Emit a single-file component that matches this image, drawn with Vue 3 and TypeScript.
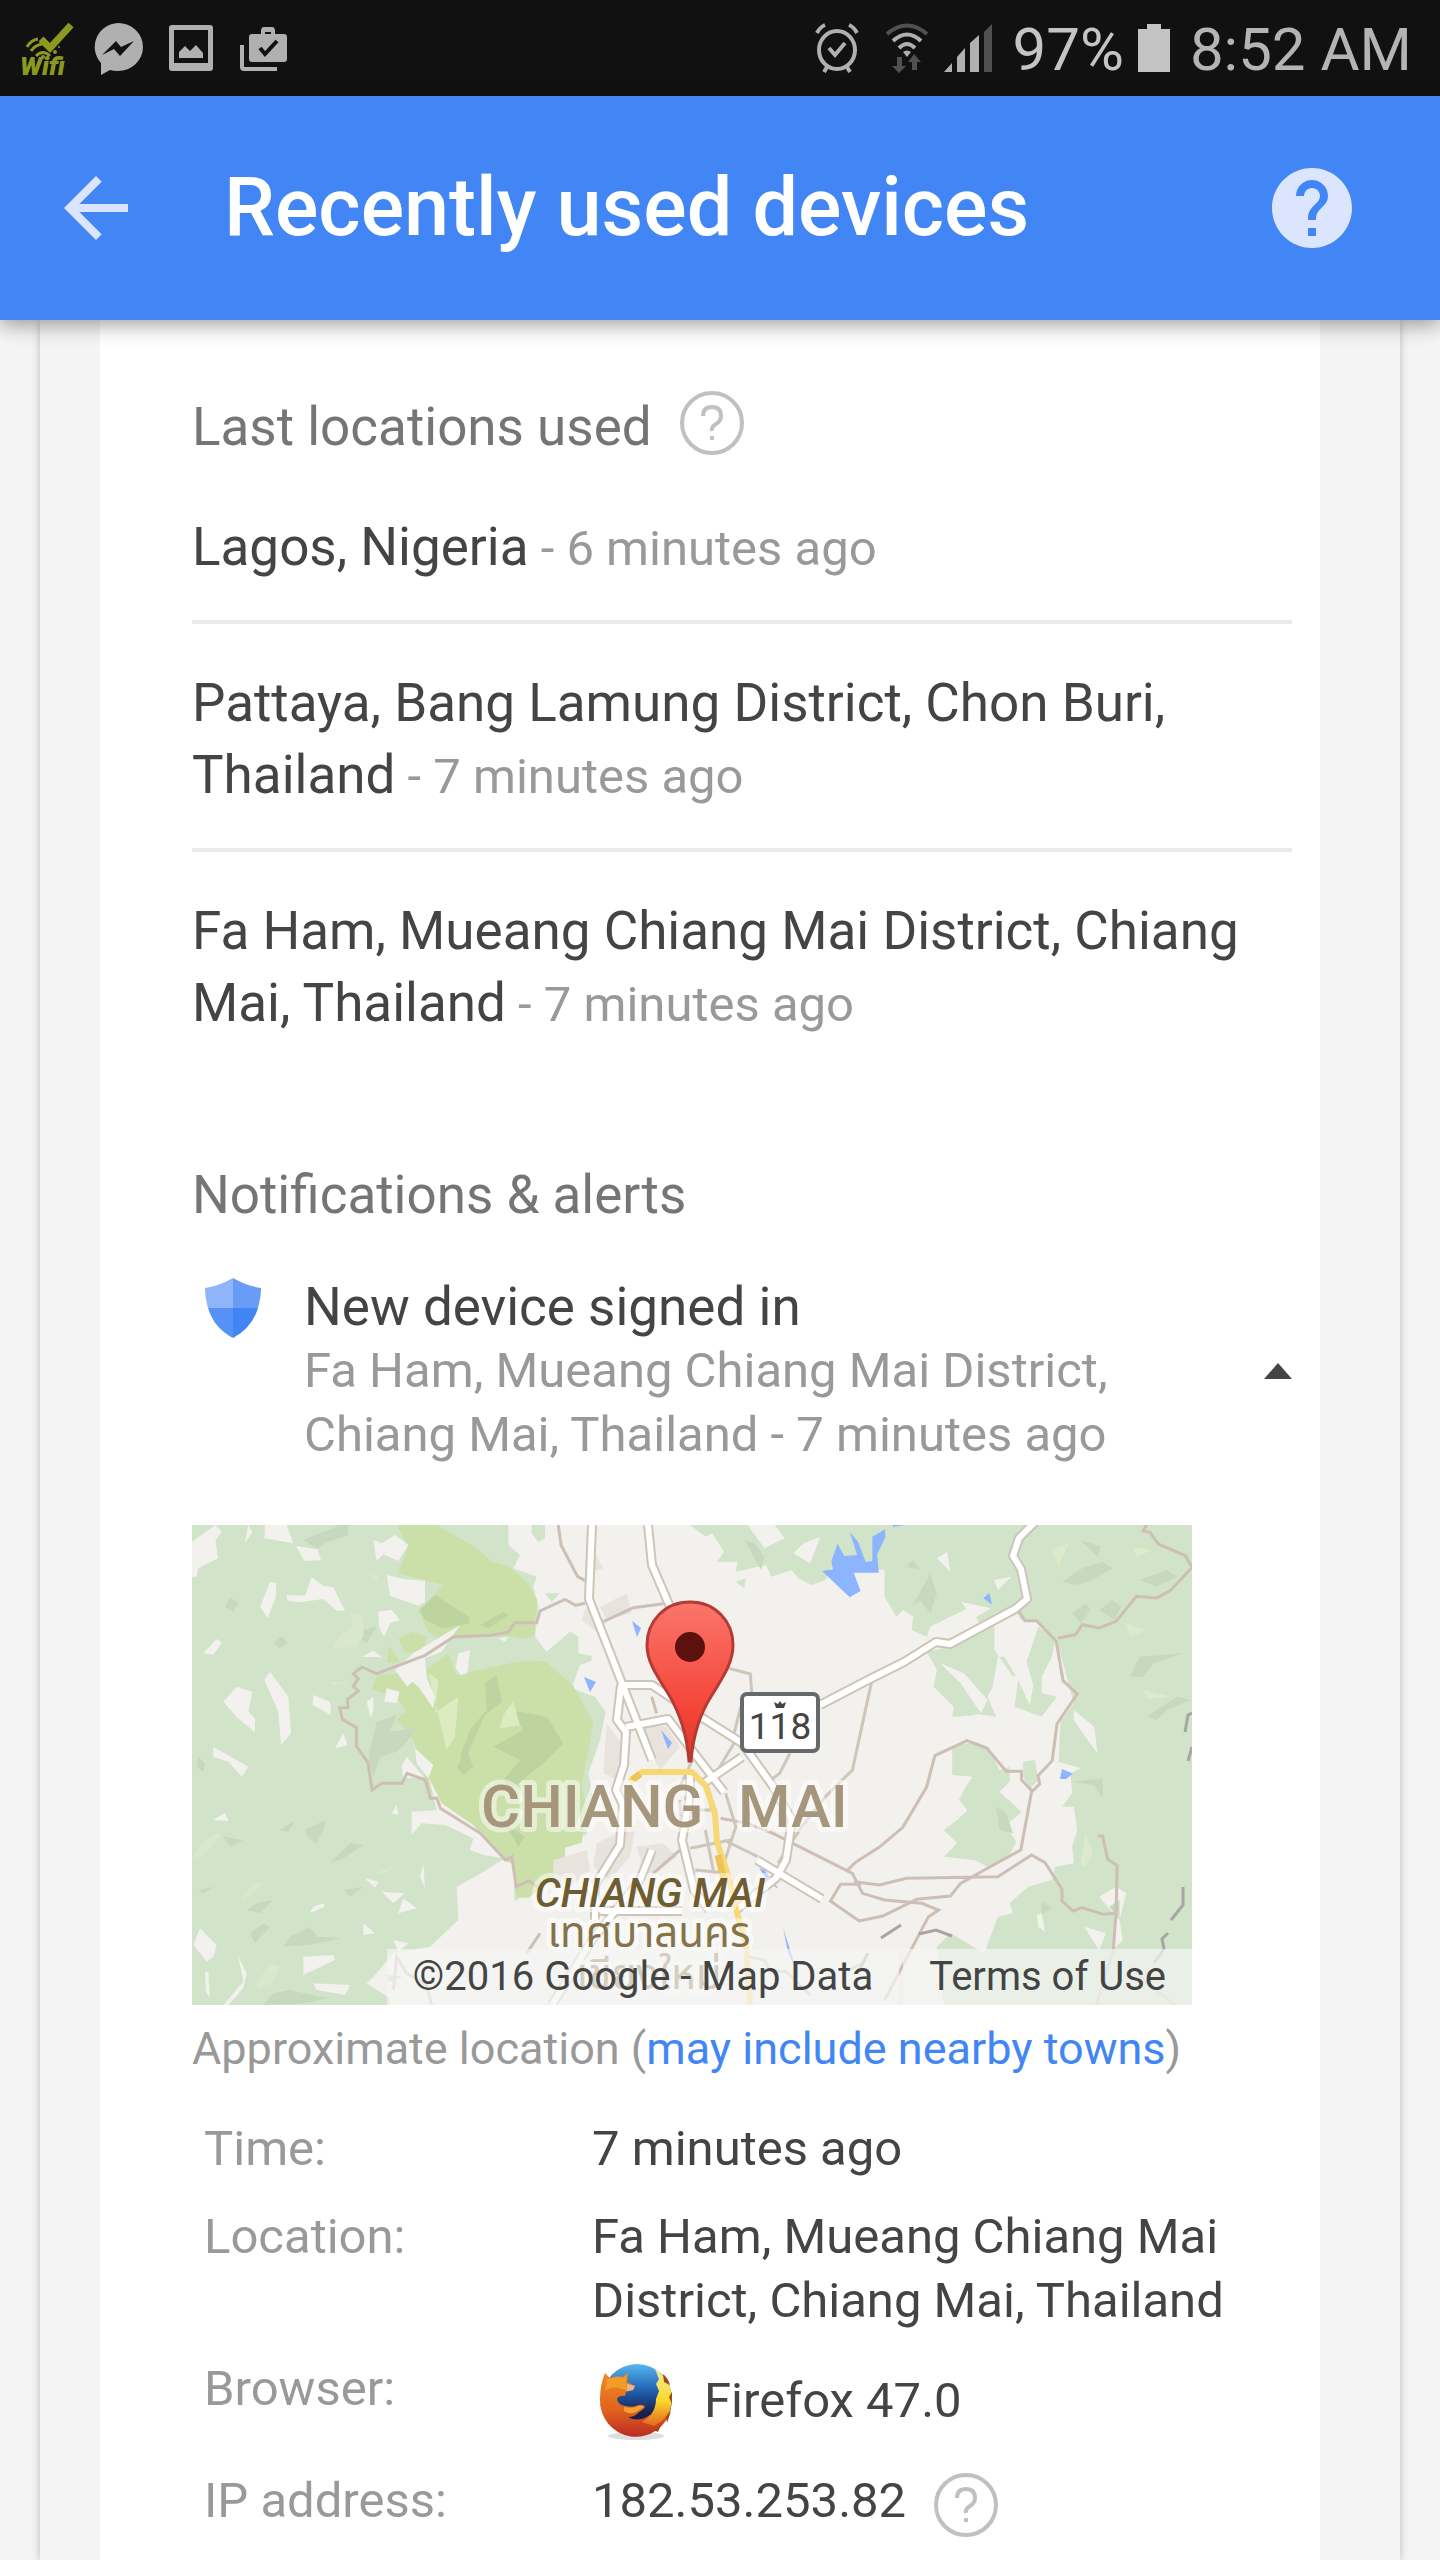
<script setup lang="ts">
import { ref } from 'vue'

interface UsedLocation {
  place: string
  when: string
}

const locations: UsedLocation[] = [
  { place: 'Lagos, Nigeria', when: '6 minutes ago' },
  { place: 'Pattaya, Bang Lamung District, Chon Buri, Thailand', when: '7 minutes ago' },
  { place: 'Fa Ham, Mueang Chiang Mai District, Chiang Mai, Thailand', when: '7 minutes ago' },
]

const expanded = ref<boolean>(true)
</script>

<template>
  <div class="screen">
    <div class="status">
      <div class="status-group">
        <svg class="ic-app" viewBox="0 0 56 56" aria-hidden="true">
          <path d="M23 19l9 9L53 5" fill="none" stroke="#8b9a1f" stroke-width="7" />
          <path d="M9 27q4-7 11-8M13 31q4-6 11-7M18 36q7-7 14 0" fill="none" stroke="#8b9a1f" stroke-width="3" />
          <circle cx="25" cy="37" r="2" fill="#8b9a1f" />
          <circle cx="37" cy="32" r="2" fill="#8b9a1f" />
          <circle cx="41" cy="27" r="1" fill="#8b9a1f" />
          <text x="2" y="55" class="wifi-word">Wifi</text>
        </svg>
        <svg class="ic-app" viewBox="0 0 56 56" aria-hidden="true">
          <path d="M28 3a25 24 0 0 1 0 48q-5 0-8-1l-9 5V43A24.500 24 0 0 1 28 3z" fill="#b0b0b0" />
          <path d="M12 35l14-14 5 6 13-6-14 15-6-7z" fill="#111" />
        </svg>
        <svg class="ic-app" viewBox="0 0 56 56" aria-hidden="true">
          <path fill-rule="evenodd" d="M10 5h38q3 0 3 3v40q0 3-3 3H10q-3 0-3-3V8q0-3 3-3zm2 5v33h34V10z" fill="#b0b0b0" />
          <path d="M17 38v-6l6-6 5 5 6-6 7 8v5z" fill="#b0b0b0" />
        </svg>
        <svg class="ic-app" viewBox="0 0 56 56" aria-hidden="true">
          <path d="M8 25v22q0 2 2 2h33" fill="none" stroke="#b0b0b0" stroke-width="4" />
          <path fill-rule="evenodd" d="M18 14h9v-3q0-4 3-4h8q3 0 3 4v3h9q3 0 3 3v22q0 3-3 3H18q-3 0-3-3V17q0-3 3-3zm13 0h6v-2h-6z" fill="#b0b0b0" />
          <path d="M26 28l5 6 12-13" fill="none" stroke="#111" stroke-width="4" />
        </svg>
      </div>
      <div class="status-group status-right">
        <svg class="ic-alarm" viewBox="0 0 44 50" aria-hidden="true">
          <g fill="none" stroke="#b0b0b0" stroke-width="4">
            <ellipse cx="22" cy="27" rx="18" ry="19" />
            <path d="M2 10q3-6 8-8M42 10q-3-6-8-8M12 44l-3 5M32 44l3 5M14 25l6 7 10-12" />
          </g>
        </svg>
        <svg class="ic-wifi" viewBox="0 0 44 50" aria-hidden="true">
          <g fill="none" stroke-width="4">
            <path d="M2 11q20-17 40 0" stroke="#505050" />
            <path d="M8 18q14-13 28 0M14 25q8-8 16 0" stroke="#b0b0b0" />
          </g>
          <path d="M18 29q4-3 8 0l-4 5z" fill="#b0b0b0" />
          <path d="M12 34h5v9h4l-7 7-7-7h5zM27 47h5v-8h4l-7-8-6 8h4z" fill="#505050" />
        </svg>
        <svg class="ic-signal" viewBox="0 0 50 50" aria-hidden="true">
          <path d="M1 49l8-9v9zM14 49V34l8-9v24zM27 49V20l9-8v37z" fill="#b0b0b0" />
          <path d="M41 49V9l8-8v48z" fill="#505050" />
        </svg>
        <span class="battery-level">97%</span>
        <svg class="ic-battery" viewBox="0 0 32 48" aria-hidden="true">
          <path d="M9 0h14v5h9v43H0V5h9z" fill="#c4c4c4" />
        </svg>
        <span class="clock">8:52 AM</span>
      </div>
    </div>

    <header class="bar">
      <button class="icon-button" type="button" aria-label="Back">
        <svg viewBox="0 0 24 24"><path d="M20 11H7.830l5.590-5.590L12 4l-8 8 8 8 1.410-1.410L7.830 13H20v-2z" fill="#dbe6fe" /></svg>
      </button>
      <h1>Recently used devices</h1>
      <button class="icon-button" type="button" aria-label="Help">
        <svg viewBox="0 0 24 24"><path d="M12 2C6.480 2 2 6.480 2 12s4.480 10 10 10 10-4.480 10-10S17.520 2 12 2zm1 17h-2v-2h2v2zm2.070-7.750l-.9.920C13.450 12.900 13 13.500 13 15h-2v-.5c0-1.100.45-2.100 1.170-2.830l1.240-1.260c.37-.36.59-.86.59-1.410 0-1.100-.9-2-2-2s-2 .9-2 2H8c0-2.210 1.790-4 4-4s4 1.790 4 4c0 .88-.36 1.680-.93 2.250z" fill="#dbe6fe" /></svg>
      </button>
    </header>

    <main class="backdrop">
      <div class="card">
        <div class="panel">
          <section>
            <div class="heading-row">
              <h2>Last locations used</h2>
              <button class="hint" type="button" aria-label="About last locations">
                <svg viewBox="0 0 64 64"><circle cx="32" cy="32" r="30" /><path d="M23 25q0-9 9-9t9 9q0 5-5 8t-4 7" /><path d="M32 45v4" /></svg>
              </button>
            </div>
            <ul class="places">
              <li v-for="item in locations" :key="item.place">{{ item.place }}<span class="when"> - {{ item.when }}</span></li>
            </ul>
          </section>

          <section class="alerts">
            <h2>Notifications &amp; alerts</h2>
            <div class="alert">
              <svg class="shield" viewBox="0 0 58 62" aria-hidden="true">
                <path d="M29 1Q15 9 1 11Q1 20 4 31H29z" fill="#8fb4fa" />
                <path d="M29 1Q43 9 57 11Q57 20 54 31H29z" fill="#689cf7" />
                <path d="M4 31Q10 51 29 61V31z" fill="#5691f6" />
                <path d="M54 31Q48 51 29 61V31z" fill="#4185f5" />
              </svg>
              <div class="alert-text">
                <h3>New device signed in</h3>
                <p>Fa Ham, Mueang Chiang Mai District, Chiang Mai, Thailand - 7 minutes ago</p>
              </div>
              <button class="toggle" type="button" aria-label="Toggle details" :aria-expanded="expanded" @click="expanded = !expanded">
                <svg viewBox="0 0 28 16"><path d="M14 0l14 16H0z" fill="#444" /></svg>
              </button>
            </div>

            <div v-if="expanded" class="details">
              <div class="map">
                <svg class="map-art" viewBox="0 0 1000 480" role="img" aria-label="Map of Chiang Mai">
                  <defs>
                    <linearGradient id="pin" x1="0" y1="0" x2="0" y2="1">
                      <stop offset="0" stop-color="#fb756b" />
                      <stop offset="0.700" stop-color="#f44336" />
                      <stop offset="1" stop-color="#d83a30" />
                    </linearGradient>
                  </defs>
                  <rect width="1000" height="480" fill="#f2f1ed" />

                  <!-- western hills -->
                  <g transform="translate(-12 -15) scale(0.33333)">
                    <path fill="#d1e4c9" d="M36 45H985V105L1020 135 1000 175 1070 200 1060 230 1075 290 1065 380 1100 425 1170 365 1195 380V430L1235 437V452L1200 465 1175 535 1245 560 1277 605 1260 690 1225 790 1240 870 1220 975 1165 980 1100 1100 1003 1175V1050L965 1050 895 1095 830 1130 835 1230 750 1310 640 1330 590 1390 560 1420 630 1465V1485H36zM1055 45h40v40l-20 10-20-25zM1095 250h45l-25 25z" />
                    <path fill="#cbdfa9" d="M650 45H770L890 115 940 158 985 168 1040 215 1072 270 1065 330V375L1030 388 990 378 820 380 785 392 745 365 715 300 760 260 790 225 655 190 685 110zM655 385l40-20 45 15-10 40-55 10zM625 405l35 50-38 5zM592 495l65-5 60 40 45 60-22-110 65-50 25 65 180-40 85-2 85 75 60 110-35 190 15 70-15 100-50 15v35l-35 60-75 55h-35l-10-100-45-20-160-130-50-80-45-145-50-60 30-25-30-40-75-25z" />
                    <path fill="#bdd3a0" d="M720 300l45-45 100 65 5 20-85 15-50-25zM900 345l70-40 15 10-60 40zM915 520l35-25 15 80-50 40-45 100-15 50-15-25 30-80 50-60zM990 600l110 20 50 80-60 60-100 80-20-30 50-60-80-40 90-50zM830 770l30-50 20 50-30 25zM975 940l60 40-20 30z" />
                    <path fill="#dcebc0" d="M745 490l30 20-10 100 40-30 30-20-10 120-25 40zM1000 575l-30 40-10 40 60-10z" />
                    <path fill="#f2f1ed" d="M36 95l70-50 20 20-20 25 8 55-60 30-4 25H36zM255 45h65l20 55-87-15zM205 45l12 20-22 35zM348 108l65 10 10 32-50 3zM580 90l25 10 40-25 40 30-30 48-45-20-20 20zM270 215l18 5v40l-25 65-22-35zM320 255l55 2 20-55 35 25 30 5 35 70h-25l-40-35-70 10-38-5zM620 195l50 12 65 5v65l-20 10-85-30zM595 305l40-5 25 30-30 10-18 40-15-30zM70 430l40-43 15 12-25 35zM545 440l35-18 27 20zM270 485l55 75 8 110-30 35-8-100-42-95zM130 575l40-45 47 15-12 60 20 20v42l-55-45zM400 555l50 20 3 40-55-30zM560 575l20-15v40l-8 25zM620 535l38 10-7 35-38-5zM645 480l55-50 140-85-55 80-50 20 5 60 25 55-5 35-45-65-18-15-15 15zM835 430l35-10-8 70-20 5-15-20zM665 770l15-30 50 60-60 5zM705 715l55 50-15 40-35-45zM745 800l40 80 95 65 90 100-60-10-40-15 10-35-85-40-70-5-30 35V905l75-5zM635 910l15-25 5 30zM100 930l35-22 10 25zM100 710l105 60-20 30-40-45-45-15zM465 715l25-45 12 35zM605 1145l70 5-35 30zM655 1210l15-45 40 30zM730 1060l5 75-15-35zM555 1105l40 10-10 18zM60 1255l50 50-10 35-20 15-40-50zM175 1340l25 50-10 45-45 50h-15l60-70zM400 1190l30-10 5 10-45 18zM550 1240l35 30-35 5zM370 1340l90-5 5 15-95 45zM400 1420l110 5-15 30-85-15zM75 1385h10l5 80-12-20zM640 1290l45 10-30 25zM955 385l30-5-10 15z" />
                    <path fill="#c6d8be" d="M370 90l110-45h25v30l-60 20-35 20zM150 260l25 20-15 25-25-15zM280 400l25-20 20 20-25 15zM550 360l40-10-30 50-25-15zM590 635l60-20-20 50 80-10-30 40-30 30-50 15-20 60-15-60zM375 960l60-30v20l-25 50-25-15zM300 960l45-30-20 35zM130 980l60 10-40 20zM450 1060l60-60 40 5-60 40zM330 1280l60-30 20 30 75 5-100 20-75 5zM210 1270l40-30 20 10-45 50zM200 1200l30-20 50-10-40 40zM250 1485l30-35 50-10 110 25-60 15zM55 1140l45-10-30 20zM55 740l20 20-5 25-20-15zM490 1140l60-10-40 30zM620 1395l50 5-45 15z" />
                    <path fill="#d9e8ca" d="M510 310l40 10v60l-20 30-70 5 20-40 40-20zM36 1050l30-50 40-30h20l-50 60zM450 515l60 5-55 4zM570 190l25 10-5 15zM230 1420l40-60 30 10-25 50-40 15zM590 1090l60-30-30 30zM180 1170l40-50 40-5-60 50z" />
                    <path fill="#e8e3dc" d="M1240 120l30 55-35 10zM1260 290l80-40 15 60-75 20zM1215 300l20-20 40 60-20 30-50-40zM1280 640l60 80-30 90-40-20zM1380 640l80 10 40 60-60 70-30-60zM1120 1050l100-30 10 60-60 50-50-20zM1250 1000l120-60-20 100-60 70-50-40zM1370 1010l80-10 40 40-90 70z" />
                  </g>

                  <!-- eastern hills -->
                  <g transform="translate(488 -15) scale(0.33807 0.33333)">
                    <path fill="#d1e4c9" d="M30 45H1515V1485H780L760 1310 800 1270 900 1330 940 1220 985 1210 975 1180 1030 1130 1100 1110 1110 1070 1165 1060 1160 1010 1175 960 1165 890 1130 890 1160 850 1155 790 1185 775 1120 755 1125 635 1165 580 1120 410 1055 330 1010 330 990 300 930 310V420L985 500 1030 440 1060 350 1110 390 1100 440 1070 500V550L1115 560 1070 620 990 590 1000 510 960 440 940 440 925 530 910 560 935 620 860 610 880 615 820 620 805 620 810 590 750 530 760 480 730 425 800 410 860 370 890 350 860 290 740 350 730 380 685 360 690 320 660 300 640 320 605 260 605 180 450 170 430 210 390 225 350 205 330 180 270 200 255 165 165 185 170 155 110 155 130 125 95 70 75 80zM165 215l30-10-5 30zM805 710l70-15 40 20 30 65 30-10v45l-30 30 65 60-20 20-30 20 35 50-25 50-60 25-40-20-90-10 40-40-40-40 40-30 30-30-25-30 20-40 20-30-60-5zM1015 755l35-5 10 60-25 25-20-35z" />
                    <path fill="#f2f1ed" d="M200 45h80l30 40-60 30zM335 130l30-30 50-20-30 80zM760 145l30-20 10 60zM930 210l50-10-40 40zM830 275l90 20-50 30zM1165 600l60 50 10 80-30-40-40-60zM770 460l70 30 70 80-20 40-60-90zM985 350l-20 80 30 70 40 85 10-60-20-70 30-100zM1240 1160l50-30 30 20-20 80 10 60-30 30 10-100zM1195 1250l65 20-20 50zM1055 1215l15-5 10 55-20-15z" />
                    <path fill="#c6d8be" d="M1130 215l60-40 60-20 30 20-70 40-40 10zM1185 90l60 20-10 30zM1360 210l80-30 30 20-60 30zM1160 310l40-30 15 20-30 40zM1240 300l40-30 25 20-20 40zM1330 500l30-60 130-10-90 30-30 40zM1380 620l90-60 40 10-70 30-30 30zM740 190l20 60-20 60-30-40-20 15zM190 90l30 10 30 40-10 40zM670 170l20-20 20 30zM1160 815l90-10v60l-25-40zM935 890l30 20 20 60-40-10zM1070 1175l30 20-30 20zM1270 1190l30-20v60z" />
                    <path fill="#dceacb" d="M1340 110l60 10-50 20zM1100 120l50-20-30 70zM1185 1060l15-90 20 60-20 40zM1320 340l60 20-50 20zM1370 540l80 20-70 5z" />
                    <path fill="#8db5ff" d="M502 66l25 30 22 60 20-3V80l38-22v25l-24 50 5 55h-74l20 55-32 19-82-79 32-5-4-25 18-52 20 37 38-3zM630 45h35l-35 6zM897 265l18-16 8 35zM1130 777l32 14-20 16h-18zM235 1075l15 5 42 57-30-20zM305 1255l32 100 3 20-20-45z" />
                  </g>
                  <path fill="#8db5ff" d="M440 96l9 7-4 9zM392 152l12 5-6 10zM469 205l11 13-4 6z" />

                  <!-- minor roads and district borders -->
                  <g transform="translate(-12 -15) scale(0.33333)" fill="none" stroke="#cdbfb6" stroke-width="9">
                    <path d="M1215 280l-28 6-32-18-75 35-10 35h-65l-20 28-50 10-115 5-85 55-145 55-45-20-25 20 15 15-15 22 15 15-33 25 2 25h-25l8 35 42 25v55l35 50 12 82 30-20h60l15-30 55 20 15 55h20l10 30 120 75 75 80 20-10 12 90 38-18 40 30" />
                    <path d="M1135 45l8 60 50 95 22 12M1270 335l90-42 90-12M1415 560l15 50M1420 1090l80-70M1040 1330l40-60M640 1440l10-100 30 50 60 35 15 60" />
                  </g>
                  <g transform="translate(488 -15) scale(0.33807 0.33333)" fill="none" stroke="#cfc6ba" stroke-width="9">
                    <path stroke="#cdbfb6" d="M1380 45l-10 17 20 5 25 35 80 35 20 35-65 70-40 22-60-5-60 75-50 20-50-10-20 30-52 10M1000 300l20 32h35l58 62 20 118 42 40-60 90-14 110-42 45 5 25-22 22-32-35v-25h-45l-58-70-58-22-95 45-25 95-70 120-70 60-70 45-28 28M1040 845l-32 175-108 60-70 40-30 38-100 10-100 50-70 15-85-60 30-50h60M1235 978h15l15 70 28 18-3 140-8 110-50 170M1285 1210l-32 3-65-20-25 10-33-30v-35l-50-80-40-23-100 65-270 5-80 20-75-10M120 925l80 15 75 30 235 120 30 60 65 20 110 10 50 20-30 20-130 250" />
                    <path d="M145 475l63 17 5 70M570 500l-60 280-80 80M325 730l-30 60-40 30M180 590l-20 80M160 700l-60 100M430 860l-70 90-70 110M135 850l30 100-35 110M130 990l100 50M30 1015l120-25M75 960l25 130M0 870l5 100M20 900h90M45 1080l100 10M50 720l-50 110M200 1340l50 10 15 30 50 5 70 70M500 1380l40-20M1340 1370l30 40 100 80" />
                  </g>

                  <!-- highways: casing then fill -->
                  <g fill="none" stroke-linejoin="round">
                    <g stroke="#cdc5b8" stroke-width="10">
                      <path d="M400 0L397 74 460 235M456 0l4 40 28 65M430 160h30l30 20 60 38 30 42 20 35-6 40-10 18-40 32M429 160l-4 35 9 12-2 33-8 25 7 15-3 40-25 40v35M434 202l42-8 56 73M628 180l48-25 36-18 32-20 14 2 65-35 12-10-6-30-8-13 6-18 20-20M565 335l65 39M550 232l-38 26M498 250v20l-8 45 12 50 15 20M395 356l15 30h80M360 480l40-65 48-60 12-30" />
                    </g>
                    <g stroke="#fff" stroke-width="6">
                      <path d="M400 0L397 74 460 235M456 0l4 40 28 65M430 160h30l30 20 60 38 30 42 20 35-6 40-10 18-40 32M429 160l-4 35 9 12-2 33-8 25 7 15-3 40-25 40v35M434 202l42-8 56 73M628 180l48-25 36-18 32-20 14 2 65-35 12-10-6-30-8-13 6-18 20-20M565 335l65 39M550 232l-38 26M498 250v20l-8 45 12 50 15 20M395 356l15 30h80M360 480l40-65 48-60 12-30" />
                    </g>
                    <path d="M438 257l12-10h50l14 14 9 28 2 28 11 33 8 34 10 36 4 60" stroke="#f8d875" stroke-width="6" />
                    <path d="M526 330l6 25M440 255l8-6" stroke="#ecc554" stroke-width="7" />
                  </g>
                  <g fill="none" stroke="#aaa5a3" stroke-width="3">
                    <path d="M689 413l20-13M727 409l17-4 16 6M1000 188l-4 2-3 17M1000 222l-4 14M991 362v18l-12 15M976 408l-6 6 2 10-10 14M676 428l-10 20" />
                  </g>

                  <!-- labels -->
                  <text x="289" y="302" class="map-city">CHIANG <tspan x="546">MAI</tspan></text>
                  <text x="458" y="382" class="map-town">CHIANG MAI</text>
                  <text x="457" y="422" class="map-thai">เทศบาลนคร</text>
                  <text x="457" y="464" class="map-thai">เชียงใหม่</text>

                  <rect x="550" y="169" width="76" height="57" rx="5" fill="#fff" stroke="#66696b" stroke-width="4" />
                  <text x="588" y="214" class="map-route">118</text>
                  <path d="M582 177l4 2 2-3 2 3 4-2-2 6h-8z" fill="#444" />

                  <path d="M498 77C473 77 455 96 455 120C455 138 466 152 477 170C489 190 495 212 497 236H499C501 212 507 190 520 170C531 152 541 138 541 120C541 96 523 77 498 77z" fill="url(#pin)" stroke="#b53a33" stroke-width="3" />
                  <circle cx="498" cy="122" r="15" fill="#5c110f" />
                </svg>
                <div class="map-credit">
                  <a href="#map-data">©2016 Google - Map Data</a>
                  <a href="#terms">Terms of Use</a>
                </div>
              </div>
              <p class="approx">Approximate location (<a href="#nearby">may include nearby towns</a>)</p>

              <table class="facts">
                <tbody>
                  <tr>
                    <th scope="row">Time:</th>
                    <td>7 minutes ago</td>
                  </tr>
                  <tr>
                    <th scope="row">Location:</th>
                    <td>Fa Ham, Mueang Chiang Mai District, Chiang Mai, Thailand</td>
                  </tr>
                  <tr>
                    <th scope="row">Browser:</th>
                    <td>
                      <div class="browser">
                        <svg viewBox="0 0 88 88" aria-hidden="true">
                          <defs>
                            <linearGradient id="globe" x1="0" y1="0" x2="0" y2="1">
                              <stop offset="0" stop-color="#58b5ee" />
                              <stop offset="0.350" stop-color="#2368b8" />
                              <stop offset="0.700" stop-color="#16204f" />
                            </linearGradient>
                            <linearGradient id="fox" x1="0" y1="0" x2="0" y2="1">
                              <stop offset="0" stop-color="#f08c22" />
                              <stop offset="0.600" stop-color="#e0601e" />
                              <stop offset="1" stop-color="#b92c22" />
                            </linearGradient>
                            <linearGradient id="tail" x1="0" y1="0" x2="0" y2="1">
                              <stop offset="0" stop-color="#f4ec9a" />
                              <stop offset="0.550" stop-color="#fbd92a" />
                              <stop offset="1" stop-color="#e2671f" />
                            </linearGradient>
                          </defs>
                          <ellipse cx="44" cy="79" rx="28" ry="4" fill="#dedede" />
                          <circle cx="45" cy="42" r="35" fill="url(#globe)" />
                          <path d="M13 16L18 21Q26 18 31 20L36 16 35 25 43 29 41 33 34 35 33 39Q27 38 25 42Q26 48 34 49Q42 51 46 48Q52 47 53 50Q51 53 47 55Q43 60 36 60Q46 66 58 58L79 52A36 36 0 0 1 8 42Q8 28 13 16z" fill="url(#fox)" />
                          <path d="M63 12Q80 24 80 43Q79 60 62 69L50 65Q64 57 64 42L67 34 64 27 67 22z" fill="url(#tail)" />
                          <path d="M71 17q5 4 7 11l-6-3zM77 40l3-5v12zM74 60l5-6-4 12zM62 73l7-5-3 7z" fill="#9c4a1c" />
                          <path d="M15 22Q25 19 31 21L35 18 34 25 35 34Q22 27 13 34z" fill="#f39b27" />
                          <path d="M35 27l8 2-2 4-6 1z" fill="#e9b58f" />
                          <path d="M32 50q8 2 14-1 5-1 6 1-4 3-8 5-6 3-12-1z" fill="#f2a030" />
                        </svg>
                        <span>Firefox 47.0</span>
                      </div>
                    </td>
                  </tr>
                  <tr>
                    <th scope="row">IP address:</th>
                    <td>
                      <div class="ip">
                        <span>182.53.253.82</span>
                        <button class="hint" type="button" aria-label="About IP addresses">
                          <svg viewBox="0 0 64 64"><circle cx="32" cy="32" r="30" /><path d="M23 25q0-9 9-9t9 9q0 5-5 8t-4 7" /><path d="M32 45v4" /></svg>
                        </button>
                      </div>
                    </td>
                  </tr>
                </tbody>
              </table>
            </div>
          </section>
        </div>
      </div>
    </main>
  </div>
</template>

<style>
body {
  margin: 0;
  background: #f4f4f4;
}
</style>

<style scoped>
.screen {
  display: flex;
  flex-direction: column;
  min-height: 100vh;
  font-family: Roboto, "Noto Sans", sans-serif;
  color: #444;
}
h1, h2, h3, p, ul {
  margin: 0;
  padding: 0;
}
button {
  padding: 0;
  border: 0;
  background: none;
  cursor: pointer;
}
svg {
  display: block;
}
a {
  color: #4285f4;
  text-decoration: none;
}

.status {
  display: flex;
  align-items: center;
  justify-content: space-between;
  height: 96px;
  padding: 0 28px 0 18px;
  background: #111;
}
.status-group {
  display: flex;
  align-items: center;
  gap: 16px;
}
.ic-app {
  width: 56px;
  height: 56px;
  overflow: visible;
}
.wifi-word {
  font: italic 900 26px Roboto, sans-serif;
  fill: #8b9a1f;
}
.status-right {
  gap: 14px;
}
.ic-alarm {
  width: 44px;
  height: 50px;
  margin-right: 12px;
}
.ic-wifi {
  width: 44px;
  height: 50px;
}
.ic-signal {
  width: 50px;
  height: 50px;
}
.ic-battery {
  width: 32px;
  height: 48px;
}
.battery-level,
.clock {
  padding-top: 4px;
  font-size: 60px;
  line-height: 72px;
  color: #b4b4b4;
}
.battery-level {
  margin-left: 6px;
  color: #c4c4c4;
}
.clock {
  margin-left: 6px;
}

.bar {
  position: relative;
  display: flex;
  align-items: center;
  height: 224px;
  padding: 0 80px 0 48px;
  background: #4285f4;
  box-shadow: 0 4px 20px rgba(0, 0, 0, 0.4);
}
.bar h1 {
  flex: 1;
  margin-left: 80px;
  font-size: 81px;
  font-weight: 500;
  line-height: 96px;
  color: #fff;
}
.icon-button,
.icon-button svg {
  width: 96px;
  height: 96px;
}

.backdrop {
  display: flex;
  flex: 1;
  padding: 0 40px;
  background: #f4f4f4;
}
.card {
  display: flex;
  flex: 1;
  padding: 0 80px 0 60px;
  background: #f4f4f4;
  box-shadow: 0 0 8px rgba(0, 0, 0, 0.24);
}
.panel {
  flex: 1;
  padding: 71px 28px 0 92px;
  background: #fff;
}

h2 {
  font-size: 53px;
  font-weight: 400;
  line-height: 72px;
  color: #757575;
}
.heading-row {
  display: flex;
  align-items: flex-start;
  gap: 28px;
}
.hint,
.hint svg {
  width: 64px;
  height: 64px;
}
.hint svg {
  fill: none;
  stroke: #c0c0c0;
  stroke-width: 4;
}

.places {
  margin-top: 5px;
  list-style: none;
}
.places li {
  padding: 43px 0 37px;
  font-size: 53px;
  line-height: 72px;
}
.places li + li {
  border-top: 4px solid #ebebeb;
}
.when {
  font-size: 49px;
  line-height: 1;
  color: #999;
}

.alerts {
  margin-top: 83px;
}
.alert {
  display: flex;
  align-items: center;
  margin-top: 44px;
}
.shield {
  flex: none;
  align-self: flex-start;
  width: 58px;
  height: 62px;
  margin: 2px 42px 0 12px;
}
.alert-text {
  flex: 1;
}
.alert-text h3 {
  font-size: 53px;
  font-weight: 400;
  line-height: 64px;
}
.alert-text p {
  font-size: 49px;
  line-height: 64px;
  color: #999;
}
.toggle {
  flex: none;
  margin-left: 24px;
}
.toggle svg {
  width: 28px;
  height: 16px;
}

.map {
  position: relative;
  max-width: 1000px;
  margin-top: 58px;
}
.map-art {
  width: 100%;
  height: auto;
}
.map-city,
.map-town,
.map-thai {
  paint-order: stroke;
  stroke: rgba(255, 255, 255, 0.5);
  stroke-width: 10px;
  stroke-linejoin: round;
}
.map-city {
  font: 500 60px Roboto, sans-serif;
  fill: #a6977c;
}
.map-town {
  font: italic 500 41px Roboto, sans-serif;
  fill: #6f5c30;
  text-anchor: middle;
}
.map-thai {
  font: 42px "Noto Sans Thai", "Noto Sans", sans-serif;
  fill: #857349;
  text-anchor: middle;
}
.map-route {
  font: 37px Roboto, sans-serif;
  fill: #444;
  text-anchor: middle;
}
.map-credit {
  position: absolute;
  right: 0;
  bottom: 0;
  display: flex;
  gap: 4px;
}
.map-credit a {
  padding: 0 26px;
  font-size: 40px;
  line-height: 56px;
  color: #444;
  background: rgba(245, 245, 245, 0.7);
}

.approx {
  margin-top: 14px;
  font-size: 45px;
  line-height: 60px;
  color: #999;
}

.facts {
  width: 100%;
  margin-top: 26px;
  border-collapse: collapse;
  font-size: 49px;
  line-height: 64px;
}
.facts th,
.facts td {
  padding: 12px;
  font-weight: 400;
  text-align: left;
  vertical-align: top;
}
.facts th {
  width: 364px;
  color: #999;
}
.browser {
  display: flex;
  align-items: center;
  gap: 24px;
}
.browser svg {
  width: 88px;
  height: 88px;
}
.ip {
  display: flex;
  align-items: flex-start;
  gap: 28px;
}
.ip .hint {
  padding-top: 4px;
  height: 68px;
}
</style>
